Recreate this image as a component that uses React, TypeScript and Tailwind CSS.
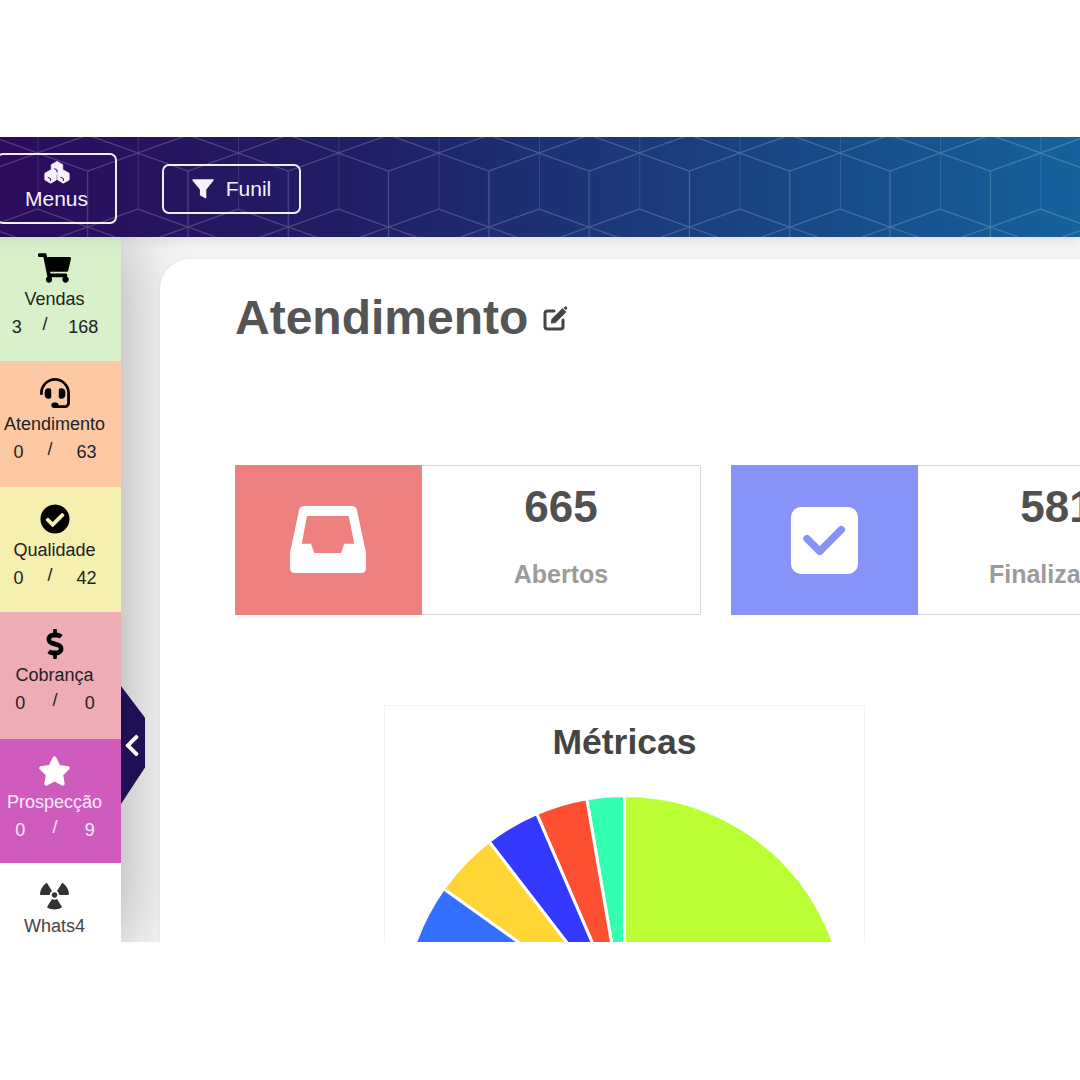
import { ReactNode } from "react"
import {
  FaCheckCircle,
  FaChevronLeft,
  FaDollarSign,
  FaHeadset,
  FaRadiation,
  FaShoppingCart,
  FaStar,
} from "react-icons/fa"

interface MenuItem {
  name: string
  icon: ReactNode
  open?: number
  total?: number
  box: string
}

const menuItems: MenuItem[] = [
  { name: "Vendas", icon: <FaShoppingCart className="w-[33px] h-[30px] text-black" />, open: 3, total: 168, box: "h-[124px] pt-[16px] bg-[#d8f1cb] text-[#222]" },
  { name: "Atendimento", icon: <FaHeadset className="w-[30px] h-[30px] text-black" />, open: 0, total: 63, box: "h-[126px] pt-[17px] bg-[#fdc9a5] text-[#222]" },
  { name: "Qualidade", icon: <FaCheckCircle className="w-[30px] h-[30px] text-black" />, open: 0, total: 42, box: "h-[125px] pt-[17px] bg-[#f5efb0] text-[#222]" },
  { name: "Cobrança", icon: <FaDollarSign className="w-[18px] h-[30px] text-black" />, open: 0, total: 0, box: "h-[127px] pt-[17px] bg-[#eeacb6] text-[#222]" },
  { name: "Prospecção", icon: <FaStar className="w-[33px] h-[30px] text-white" />, open: 0, total: 9, box: "h-[124px] pt-[17px] bg-[#cf5cbd] text-[#fbe9f8]" },
  { name: "Whats4", icon: <FaRadiation className="w-[29px] h-[30px] text-[#333]" />, box: "h-[126px] pt-[17px] bg-white text-[#444]" },
]

// angulos em graus, horario a partir do topo
const slices = [
  { from: 0, to: 130, color: "#b9ff33" },
  { from: -9.8, to: 0, color: "#33ffb0" },
  { from: -23.3, to: -9.8, color: "#ff4f33" },
  { from: -37.6, to: -23.3, color: "#3339ff" },
  { from: -54.6, to: -37.6, color: "#ffd633" },
  { from: -90, to: -54.6, color: "#3370ff" },
]

const wedge = (from: number, to: number) => {
  const cx = 229.5
  const cy = 229.5
  const r = 222
  const pt = (deg: number) => {
    const rad = (deg * Math.PI) / 180
    return `${cx + r * Math.sin(rad)} ${cy - r * Math.cos(rad)}`
  }
  return `M${cx} ${cy}L${pt(from)}A${r} ${r} 0 ${to - from > 180 ? 1 : 0} 1 ${pt(to)}Z`
}

const HeaderPattern = () => (
  <svg className="absolute inset-0 w-full h-full" aria-hidden="true">
    <defs>
      <pattern id="cubes" x="41.5" y="0" width="100.3" height="100" patternUnits="userSpaceOnUse">
        <path
          d="M0 0V72M50.15 34V100M0 16L50.15 34L100.3 16L50.15 -2L0 16M0 72L50.15 90L100.3 72M50.15 90L22 100M50.15 90L78 100"
          fill="none"
          stroke="rgba(255,255,255,0.2)"
          strokeWidth="1.2"
        />
      </pattern>
    </defs>
    <rect width="100%" height="100%" fill="url(#cubes)" />
  </svg>
)

const cube = (x: number, y: number) => {
  const r = 6.6
  const w = r * 0.87
  const h = r * 0.5
  return (
    <g key={`${x}-${y}`}>
      <path
        d={`M${x} ${y - r}L${x + w} ${y - h}V${y + h}L${x} ${y + r}L${x - w} ${y + h}V${y - h}Z`}
        fill="#f6f2fb"
        stroke="#f6f2fb"
        strokeWidth="0.8"
        strokeLinejoin="round"
      />
      <path d={`M${x - w * 0.5} ${y + 0.6}L${x} ${y + 2}V${y + 4.4}`} fill="none" stroke="#2c0b5c" strokeWidth="1" />
    </g>
  )
}

const CubesIcon = () => (
  <svg className="w-[26px] h-[23px]" viewBox="0 0 26 23" aria-hidden="true">
    {cube(13, 7)}
    {cube(6.6, 15.6)}
    {cube(19.4, 15.6)}
  </svg>
)

const FunnelIcon = () => (
  <svg className="w-[22px] h-[20px]" viewBox="0 0 22 20" aria-hidden="true">
    <path
      d="M1 1H21L13.6 10.2V18.6L8.6 15.8V10.2Z"
      fill="#f6f2fb"
      stroke="#f6f2fb"
      strokeWidth="1.4"
      strokeLinejoin="round"
    />
  </svg>
)

const EditIcon = () => (
  <svg className="w-[25px] h-[26px] shrink-0" viewBox="0 0 25 26" aria-hidden="true">
    <path
      d="M11 6H4.5A2.5 2.5 0 0 0 2 8.5V21.5A2.5 2.5 0 0 0 4.5 24H17.5A2.5 2.5 0 0 0 20 21.5V15"
      fill="none"
      stroke="#444"
      strokeWidth="3"
      strokeLinecap="round"
    />
    <path d="M9 14.5L19.5 4L22.5 7L12 17.5L8.5 18Z" fill="#444" stroke="#444" strokeWidth="1.2" strokeLinejoin="round" />
    <path d="M20.5 3L21.8 1.7Q22.6 1 23.4 1.7L24 2.3Q24.7 3.1 24 3.9L22.9 5Z" fill="#444" />
  </svg>
)

const InboxIcon = () => (
  <svg className="w-[77px] h-[68px]" viewBox="0 0 77 68" aria-hidden="true">
    <path
      fillRule="evenodd"
      fill="#fff"
      d="M14 0H62Q66 0 66.8 3.5L76 47V62Q76 67 71 67H5Q0 67 0 62V47L9.2 3.5Q10 0 14 0ZM17 10L11.7 37.7H21L24.3 47H51L54.3 37.7H64.3L58.7 10Z"
    />
  </svg>
)

const CheckBoxIcon = () => (
  <svg className="w-[67px] h-[67px]" viewBox="0 0 67 67" aria-hidden="true">
    <rect width="67" height="67" rx="10" fill="#fff" />
    <path d="M16 31.7L28.7 44.3L50.3 22.7" fill="none" stroke="#8893f9" strokeWidth="7.4" strokeLinecap="round" strokeLinejoin="round" />
  </svg>
)

const StatCard = ({ value, label, color, icon }: { value: number; label: string; color: string; icon: ReactNode }) => (
  <div className="flex w-[466px] h-[150px] shrink-0">
    <div className={`w-[187px] flex items-center justify-center ${color}`}>{icon}</div>
    <div className="flex-1 flex flex-col items-center border-y border-r border-[#d8d8d8] pt-[16px]">
      <div className="text-[44px] leading-[50px] font-bold text-[#505050]">{value}</div>
      <div className="mt-[27px] text-[25px] leading-[30px] font-bold text-[#9b9b9b]">{label}</div>
    </div>
  </div>
)

const App = () => {
  return (
    <div className="h-[1080px] bg-white pt-[137px] font-['Liberation_Sans',Arial,sans-serif]">
      <div className="h-[805px] overflow-hidden flex flex-col">
        {/* Topo */}
        <header className="relative z-[4] h-[100px] shrink-0 flex items-center gap-[45px] pt-[3px] -ml-[4px] text-[#f6f2fb] bg-[linear-gradient(90deg,#2c0b5c,#201e66_33%,#14629c)] shadow-[0_2px_14px_rgba(0,0,0,0.1)]">
          <HeaderPattern />
          <button className="relative w-[121px] h-[71px] flex flex-col items-center justify-center pb-[5px] border-2 border-[#f2eef8] rounded-[7px] text-[21px] leading-[24px]">
            <CubesIcon />
            <span className="mt-[3px]">Menus</span>
          </button>
          <button className="relative w-[139px] h-[50px] flex items-center justify-center gap-[12px] border-2 border-[#f2eef8] rounded-[7px] text-[21px]">
            <FunnelIcon />
            <span>Funil</span>
          </button>
        </header>

        <div className="relative flex-1 flex bg-[#f4f4f4] min-h-0">
          {/* Menu lateral */}
          <aside className="relative z-[1] w-[121px] shrink-0 shadow-[0_0_70px_rgba(0,0,0,0.33)]">
            {menuItems.map((item) => (
              <div key={item.name} className={`${item.box} w-[121px] text-[18px]`}>
                <div className="w-[109px] flex flex-col items-center">
                  <div className="h-[30px] flex items-center">{item.icon}</div>
                  <div className="mt-[4px] leading-[24px] whitespace-nowrap">{item.name}</div>
                  {item.total !== undefined && (
                    <div className="mt-[4px] w-[107px] ml-[1px] flex justify-around leading-[24px]">
                      <span>{item.open}</span>
                      <span className="pb-[5px] leading-[18px]">/</span>
                      <span>{item.total}</span>
                    </div>
                  )}
                </div>
              </div>
            ))}
          </aside>

          {/* Botao de recolher */}
          <button className="absolute z-[3] left-[121px] top-[449px] w-[24px] h-[118px] flex items-center justify-center pr-[2px] text-white bg-[#1f0f55] [clip-path:polygon(0_0,100%_27%,100%_69%,0_100%)]">
            <FaChevronLeft className="w-[16px] h-[25px] shrink-0" />
          </button>

          {/* Conteudo */}
          <main className="relative z-[2] ml-[39px] mt-[22px] flex-1 min-w-0 bg-white rounded-tl-[30px] pl-[75px] pt-[29px] overflow-hidden shadow-[0_0_4px_rgba(0,0,0,0.06)]">
            <div className="h-[60px] flex items-center gap-[15px]">
              <h1 className="text-[48px] font-bold text-[#555]">Atendimento</h1>
              <EditIcon />
            </div>

            <div className="mt-[117px] flex gap-[30px]">
              <StatCard value={665} label="Abertos" color="bg-[#ef8080]" icon={<InboxIcon />} />
              <StatCard value={581} label="Finalizados" color="bg-[#8893f9]" icon={<CheckBoxIcon />} />
            </div>

            <section className="mt-[90px] ml-[149px] w-[481px] border border-[#f2f2f2] pt-[16px] flex flex-col items-center">
              <h2 className="text-[35.5px] leading-[40px] font-bold text-[#444]">Métricas</h2>
              <svg className="mt-[26px] shrink-0" width="460" height="460" viewBox="0 0 460 460">
                {slices.map((s) => (
                  <path key={s.color} d={wedge(s.from, s.to)} fill={s.color} stroke="#fff" strokeWidth="3" />
                ))}
              </svg>
            </section>
          </main>
        </div>
      </div>
    </div>
  )
}

export default App
